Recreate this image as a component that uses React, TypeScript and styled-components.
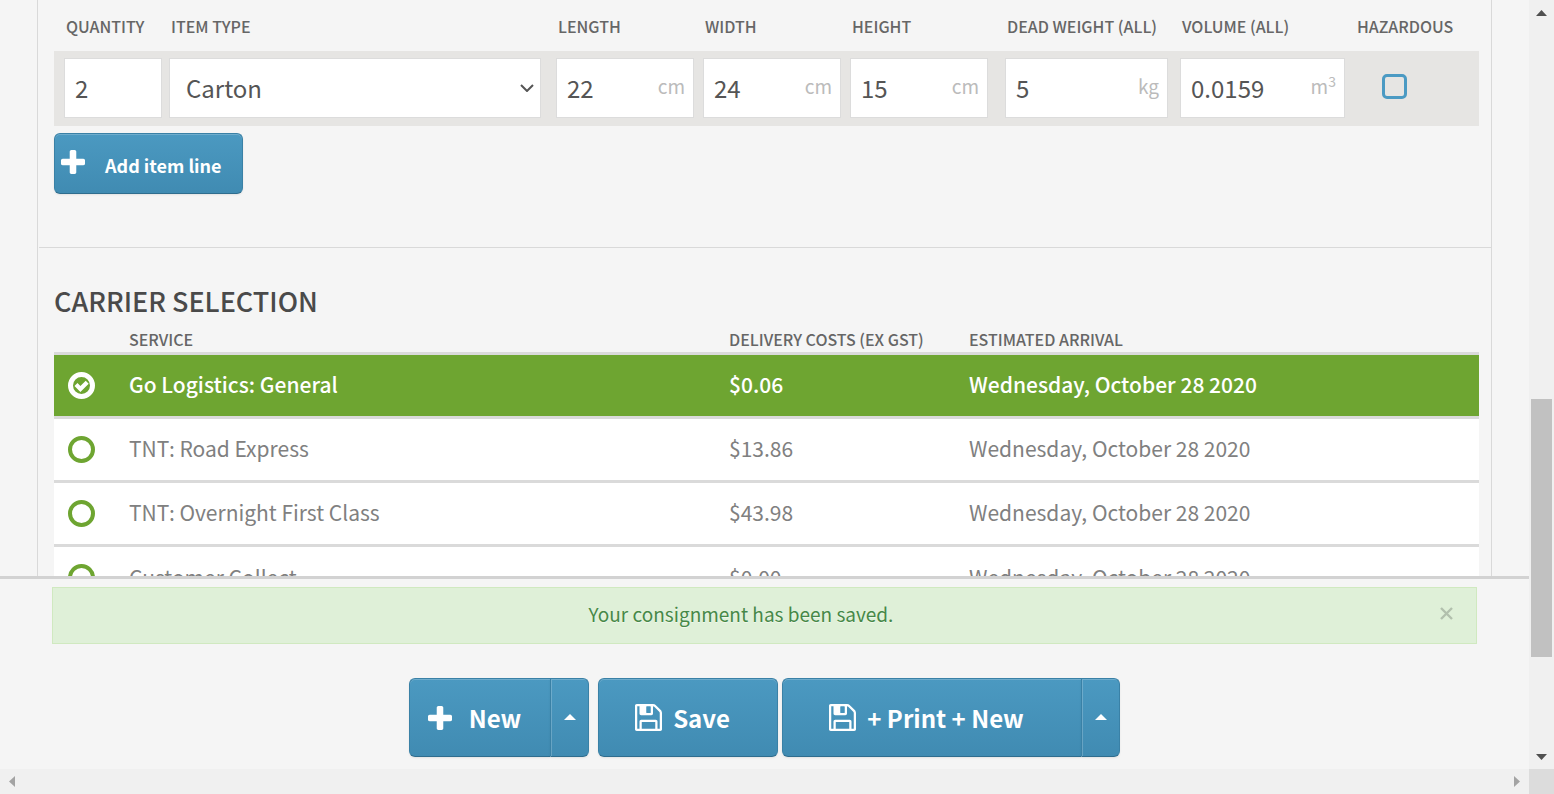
import React, { useState } from 'react';
import styled, { createGlobalStyle, css } from 'styled-components';

const GlobalStyle = createGlobalStyle`
  *, *::before, *::after { box-sizing: border-box; }
  body {
    margin: 0;
    background: #f5f5f5;
    color: #555;
    font-family: 'Noto Sans CJK SC', 'Noto Sans', sans-serif;
    font-size: 22px;
    line-height: 30px;
  }
  button, input, select { font: inherit; color: inherit; }
`;

const Viewport = styled.div`
  display: grid;
  grid-template-columns: minmax(0, 1fr) 25px;
  grid-template-rows: minmax(0, 1fr) 25px;
  height: 100vh;
`;

const Page = styled.div`
  display: flex;
  flex-direction: column;
  min-height: 0;
`;

const Content = styled.main`
  flex: 1;
  min-height: 0;
  overflow: hidden;
  padding: 0 37px;
`;

const Panel = styled.div`
  border: solid #d9d9d9;
  border-width: 0 1px;
`;

const Section = styled.section`
  padding: 0 12px 0 16px;
  & + & {
    margin-left: 1px;
    padding-left: 15px;
    border-top: 1px solid #d9d9d9;
  }
`;

const ItemTable = styled.table`
  width: 100%;
  border-collapse: collapse;
  table-layout: fixed;
`;

const HeadCell = styled.th<{ $indent: number; $width?: number; $compact?: boolean }>`
  width: ${p => (p.$width ? `${p.$width}px` : 'auto')};
  height: ${p => (p.$compact ? 26 : 51)}px;
  padding: 0 0 0 ${p => p.$indent}px;
  color: #666;
  font-size: 16px;
  font-weight: 500;
  line-height: 24px;
  text-align: left;
  text-transform: uppercase;
  white-space: nowrap;
`;

const ItemRow = styled.tr`
  background: #e6e5e3;
`;

const ItemCell = styled.td<{ $indent: number }>`
  padding: 7px 0 8px ${p => p.$indent}px;
`;

const Field = styled.div`
  display: flex;
  align-items: center;
  height: 60px;
  border: 1px solid #dcdcdc;
  background: #fff;
`;

const FieldInput = styled.input`
  flex: 1;
  width: 0;
  min-width: 0;
  height: 100%;
  padding: 0 0 2px 10px;
  border: 0;
  outline: 0;
  background: transparent;
  font-size: 24px;
`;

const Unit = styled.span`
  padding: 0 8px 4px 0;
  color: #bbb;
  font-size: 19px;
  line-height: 24px;
  sup {
    font-size: 14px;
    line-height: 0;
  }
`;

const TypeSelect = styled.select`
  width: 100%;
  height: 100%;
  padding: 0 0 0 16px;
  border: 0;
  outline: 0;
  appearance: none;
  background: transparent;
  font-size: 24px;
`;

const Chevron = styled.svg`
  flex: none;
  margin: 0 6px 0 -20px;
  pointer-events: none;
`;

const Tick = styled.input`
  display: block;
  width: 25px;
  height: 25px;
  margin: 0 0 4px 37px;
  appearance: none;
  border: 3px solid #4b9ac3;
  border-radius: 5px;
  &:checked { background: #4b9ac3; }
`;

const blueButton = css`
  display: inline-flex;
  align-items: center;
  padding: 0;
  border: 1px solid #3a81a6;
  border-bottom-color: #2f6d8e;
  border-radius: 6px;
  background: linear-gradient(#4b99c1, #408bb2);
  box-shadow: inset 0 1px 0 rgba(255, 255, 255, 0.2), 0 1px 2px rgba(0, 0, 0, 0.08);
  color: #fff;
  font-weight: 700;
  white-space: nowrap;
  cursor: pointer;
`;

const AddButton = styled.button`
  ${blueButton}
  gap: 20px;
  height: 61px;
  margin: 7px 0 53px;
  padding: 0 20px 0 6px;
  font-size: 18px;
  svg { margin-bottom: 4px; }
  span { padding-top: 2px; }
`;

const Title = styled.h2`
  margin: 0;
  padding: 33px 0 6px;
  color: #4a4a4a;
  font-size: 27px;
  font-weight: 500;
  line-height: 40px;
  text-transform: uppercase;
`;

const CarrierTable = styled(ItemTable)``;

const CarrierRow = styled.tr<{ $selected: boolean }>`
  border-top: 3px solid #dadada;
  background: ${p => (p.$selected ? '#6ea531' : '#fff')};
  color: ${p => (p.$selected ? '#fff' : '#808080')};
  font-weight: ${p => (p.$selected ? 500 : 400)};
`;

const CarrierCell = styled.td<{ $text?: boolean }>`
  height: 64px;
  padding: 0 0 ${p => (p.$text ? 2 : 0)}px;
  font-size: 21px;
`;

const RadioWrap = styled.label`
  display: grid;
  width: 27px;
  margin-left: 14px;
  > * { grid-area: 1 / 1; }
`;

const Radio = styled.input`
  width: 27px;
  height: 27px;
  margin: 0;
  appearance: none;
  border: 4px solid #6ea531;
  border-radius: 50%;
  &:checked { border: 5px solid #fff; }
`;

const Footer = styled.footer`
  border-top: 3px solid #d2d2d2;
  padding: 8px 52px 12px;
`;

const Alert = styled.div`
  display: flex;
  height: 57px;
  border: 1px solid #d0e9c0;
  background: #dff0d8;
  color: #468847;
  font-size: 19px;
  text-shadow: 0 1px 0 rgba(255, 255, 255, 0.5);
`;

const AlertText = styled.p`
  flex: 1;
  margin: 0;
  padding: 11px 0 0 12px;
  text-align: center;
`;

const CloseButton = styled.button`
  display: flex;
  align-items: center;
  justify-content: center;
  width: 59px;
  padding: 0 0 4px;
  border: 0;
  background: transparent;
  cursor: pointer;
`;

const Actions = styled.div`
  display: flex;
  justify-content: center;
  margin-top: 34px;
`;

const Split = styled.div`
  display: flex;
`;

const ActionButton = styled.button<{ $width: number; $gap: number; $joined?: boolean; $space?: number }>`
  ${blueButton}
  justify-content: center;
  gap: ${p => p.$gap}px;
  width: ${p => p.$width}px;
  height: 79px;
  margin-right: ${p => p.$space ?? 0}px;
  padding-right: 11px;
  font-size: 24px;
  span { padding-top: 1px; }
  ${p => p.$joined && 'border-right: 0; border-radius: 6px 0 0 6px;'}
`;

const CaretButton = styled.button<{ $space?: number }>`
  ${blueButton}
  justify-content: center;
  width: 39px;
  height: 79px;
  margin-right: ${p => p.$space ?? 0}px;
  padding: 0 0 2px;
  border-radius: 0 6px 6px 0;
  box-shadow: inset 1px 1px 0 rgba(255, 255, 255, 0.2), 0 1px 2px rgba(0, 0, 0, 0.08);
`;

const VerticalBar = styled.div`
  display: grid;
  grid-template-rows: 25px 374fr 258fr 87fr 25px;
  place-items: center;
  background: #f0f0f0;
`;

const Thumb = styled.div`
  grid-row: 3;
  width: 21px;
  height: 100%;
  background: #c1c1c1;
`;

const HorizontalBar = styled.div`
  display: flex;
  align-items: center;
  justify-content: space-between;
  padding: 0 9px;
  background: #f0f0f0;
`;

const Corner = styled.div`
  background: #dcdcdc;
`;

const ArrowSvg = styled.svg<{ $row?: number }>`
  grid-row: ${p => p.$row ?? 'auto'};
  display: block;
`;

const PlusIcon = () => (
  <svg width="24" height="24" viewBox="192 128 1408 1408" fill="currentColor" aria-hidden="true">
    <path d="M1600 736v192q0 40-28 68t-68 28h-416v416q0 40-28 68t-68 28h-192q-40 0-68-28t-28-68v-416h-416q-40 0-68-28t-28-68v-192q0-40 28-68t68-28h416v-416q0-40 28-68t68-28h192q40 0 68 28t28 68v416h416q40 0 68 28t28 68z" />
  </svg>
);

const FloppyIcon = () => (
  <svg width="27" height="27" viewBox="0 128 1536 1536" fill="currentColor" aria-hidden="true">
    <path d="M384 1536h768v-384h-768v384zM1280 1536h128v-896q0-14-10-38.5t-20-34.5l-281-281q-10-10-34-20t-39-10v416q0 40-28 68t-68 28h-576q-40 0-68-28t-28-68v-416h-128v1280h128v-416q0-40 28-68t68-28h832q40 0 68 28t28 68v416zM896 608v-320q0-13-9.5-22.5t-22.5-9.5h-192q-13 0-22.5 9.5t-9.5 22.5v320q0 13 9.5 22.5t22.5 9.5h192q13 0 22.5-9.5t9.5-22.5zM1536 640v928q0 40-28 68t-68 28h-1344q-40 0-68-28t-28-68v-1344q0-40 28-68t68-28h928q40 0 88 20t76 48l280 280q28 28 48 76t20 88z" />
  </svg>
);

const CheckIcon = () => (
  <svg width="27" height="27" viewBox="0 0 27 27" fill="none" aria-hidden="true" pointerEvents="none">
    <path d="M8 12.600l4.400 4.400 6.800-6.800" stroke="#fff" strokeWidth="4.200" />
  </svg>
);

const CaretIcon = () => (
  <svg width="12" height="6" viewBox="0 0 12 6" fill="currentColor" aria-hidden="true">
    <path d="M0 6L6 0l6 6z" />
  </svg>
);

type Column = { id: string; label: string; width?: number; indent: number; value?: string; unit?: React.ReactNode };

const columns: Column[] = [
  { id: 'quantity', label: 'Quantity', width: 108, indent: 10, value: '2' },
  { id: 'type', label: 'Item type', indent: 7 },
  { id: 'length', label: 'Length', width: 153, indent: 15, value: '22', unit: 'cm' },
  { id: 'width', label: 'Width', width: 147, indent: 9, value: '24', unit: 'cm' },
  { id: 'height', label: 'Height', width: 147, indent: 9, value: '15', unit: 'cm' },
  { id: 'weight', label: 'Dead weight (all)', width: 180, indent: 17, value: '5', unit: 'kg' },
  { id: 'volume', label: 'Volume (all)', width: 177, indent: 12, value: '0.0159', unit: <>m<sup>3</sup></> },
  { id: 'hazardous', label: 'Hazardous', width: 134, indent: 10 },
];

const arrival = 'Wednesday, October 28 2020';
const carriers = [
  { service: 'Go Logistics: General', cost: '$0.06' },
  { service: 'TNT: Road Express', cost: '$13.86' },
  { service: 'TNT: Overnight First Class', cost: '$43.98' },
  { service: 'Customer Collect', cost: '$0.00' },
];

function ItemControl({ column }: { column: Column }) {
  if (column.id === 'hazardous') return <Tick type="checkbox" aria-labelledby={column.id} />;
  if (column.id === 'type') {
    return (
      <Field>
        <TypeSelect aria-labelledby={column.id} defaultValue="Carton">
          <option>Carton</option>
        </TypeSelect>
        <Chevron width="14" height="8" viewBox="0 0 14 8" fill="none" aria-hidden="true">
          <path d="M1 1l6 6 6-6" stroke="#555" strokeWidth="2" />
        </Chevron>
      </Field>
    );
  }
  return (
    <Field>
      <FieldInput type="text" aria-labelledby={column.id} defaultValue={column.value} />
      {column.unit && <Unit>{column.unit}</Unit>}
    </Field>
  );
}

export default function App() {
  const [selected, setSelected] = useState(0);
  return (
    <Viewport>
      <GlobalStyle />
      <Page>
        <Content>
          <Panel>
            <Section>
              <ItemTable>
                <thead>
                  <tr>
                    {columns.map(c => (
                      <HeadCell key={c.id} id={c.id} scope="col" $width={c.width} $indent={c.indent + 2}>{c.label}</HeadCell>
                    ))}
                  </tr>
                </thead>
                <tbody>
                  <ItemRow>
                    {columns.map(c => (
                      <ItemCell key={c.id} $indent={c.id === 'hazardous' ? 0 : c.indent}><ItemControl column={c} /></ItemCell>
                    ))}
                  </ItemRow>
                </tbody>
              </ItemTable>
              <AddButton type="button"><PlusIcon /><span>Add item line</span></AddButton>
            </Section>
            <Section>
              <Title>Carrier selection</Title>
              <CarrierTable>
                <thead>
                  <tr>
                    <HeadCell as="td" $compact $width={75} $indent={0} />
                    <HeadCell scope="col" $compact $width={600} $indent={0}>Service</HeadCell>
                    <HeadCell scope="col" $compact $width={240} $indent={0}>Delivery costs (ex GST)</HeadCell>
                    <HeadCell scope="col" $compact $indent={0}>Estimated arrival</HeadCell>
                  </tr>
                </thead>
                <tbody>
                  {carriers.map((c, i) => (
                    <CarrierRow key={c.service} $selected={i === selected}>
                      <CarrierCell>
                        <RadioWrap>
                          <Radio type="radio" name="carrier" aria-label={c.service} checked={i === selected} onChange={() => setSelected(i)} />
                          {i === selected && <CheckIcon />}
                        </RadioWrap>
                      </CarrierCell>
                      <CarrierCell $text>{c.service}</CarrierCell>
                      <CarrierCell $text>{c.cost}</CarrierCell>
                      <CarrierCell $text>{arrival}</CarrierCell>
                    </CarrierRow>
                  ))}
                </tbody>
              </CarrierTable>
            </Section>
          </Panel>
        </Content>
        <Footer>
          <Alert role="status">
            <AlertText>Your consignment has been saved.</AlertText>
            <CloseButton type="button" aria-label="Close">
              <svg width="13" height="13" viewBox="0 0 13 13" stroke="#b2c0ad" strokeWidth="2.400" aria-hidden="true">
                <path d="M1 1l11 11M12 1L1 12" />
              </svg>
            </CloseButton>
          </Alert>
          <Actions>
            <Split>
              <ActionButton type="button" $joined $width={141} $gap={17}><PlusIcon /><span>New</span></ActionButton>
              <CaretButton type="button" aria-label="More new options" $space={9}><CaretIcon /></CaretButton>
            </Split>
            <ActionButton type="button" $width={180} $gap={11} $space={4}><FloppyIcon /><span>Save</span></ActionButton>
            <Split>
              <ActionButton type="button" $joined $width={299} $gap={11}><FloppyIcon /><span>+ Print + New</span></ActionButton>
              <CaretButton type="button" aria-label="More print options"><CaretIcon /></CaretButton>
            </Split>
          </Actions>
        </Footer>
      </Page>
      <VerticalBar aria-hidden="true">
        <ArrowSvg $row={1} width="11" height="6" fill="#505050"><path d="M0 6L5.500 0L11 6z" /></ArrowSvg>
        <Thumb />
        <ArrowSvg $row={5} width="11" height="6" fill="#505050"><path d="M0 0h11L5.500 6z" /></ArrowSvg>
      </VerticalBar>
      <HorizontalBar aria-hidden="true">
        <ArrowSvg width="6" height="11" fill="#a3a3a3"><path d="M6 0v11L0 5.500z" /></ArrowSvg>
        <ArrowSvg width="6" height="11" fill="#a3a3a3"><path d="M0 0v11L6 5.500z" /></ArrowSvg>
      </HorizontalBar>
      <Corner />
    </Viewport>
  );
}
